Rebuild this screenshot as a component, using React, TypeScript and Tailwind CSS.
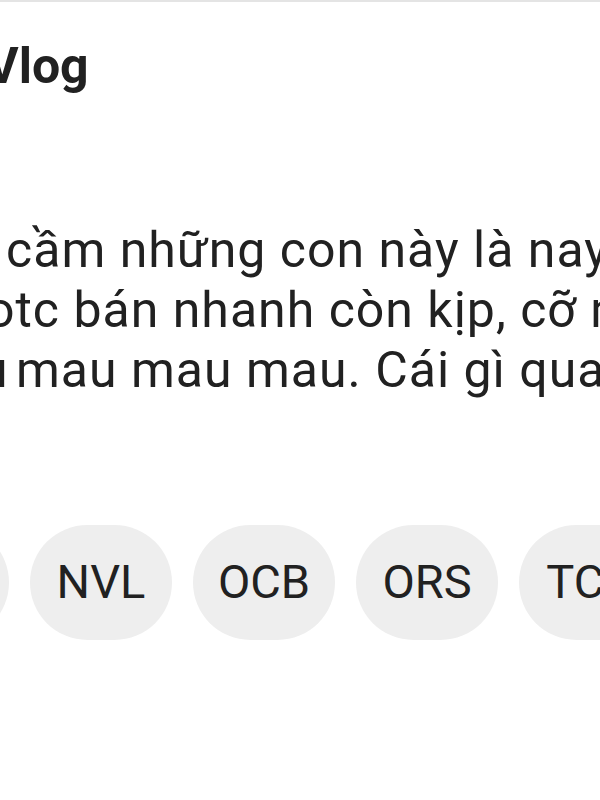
const lines = [
  { lead: 'n ', pull: '-mr-[11px]', text: 'cầm những con này là nay bán', shift: '-ml-[25px]' },
  { lead: '', pull: '', text: 'otc bán nhanh còn kịp, cỡ này', shift: '-ml-[14px]' },
  { lead: 'u ', pull: '-mr-[6px]', text: 'mau mau mau. Cái gì qua rồi', shift: '-ml-[20px]' },
]

const tickers = ['HPG', 'NVL', 'OCB', 'ORS', 'TCB']

export default function App() {
  return (
    <div
      className="w-[600px] h-[800px] overflow-hidden bg-white text-[#212121]"
      style={{ fontFamily: 'Roboto, "Noto Sans", sans-serif' }}
    >
      <div className="h-[2px] bg-[#e4e4e4]" />

      {/* Header */}
      <h1 className="mt-[34px] -ml-[14px] text-[50px] leading-[60px] font-bold whitespace-nowrap">
        Vlog
      </h1>

      {/* Post body */}
      <div className="mt-[124px] text-[50px] leading-[60px] tracking-[1px]">
        {lines.map((l) => (
          <p key={l.text} className={`whitespace-nowrap ${l.shift}`}>
            {l.lead && <span className={`inline-block whitespace-pre ${l.pull}`}>{l.lead}</span>}
            {l.text}
          </p>
        ))}
      </div>

      {/* Ticker chips */}
      <div className="mt-[125px] -ml-[133px] flex gap-[21px]">
        {tickers.map((t) => (
          <div
            key={t}
            className="h-[115px] w-[142px] shrink-0 rounded-full bg-[#eeeeee] flex items-center justify-center text-[47px]"
          >
            {t}
          </div>
        ))}
      </div>
    </div>
  )
}
